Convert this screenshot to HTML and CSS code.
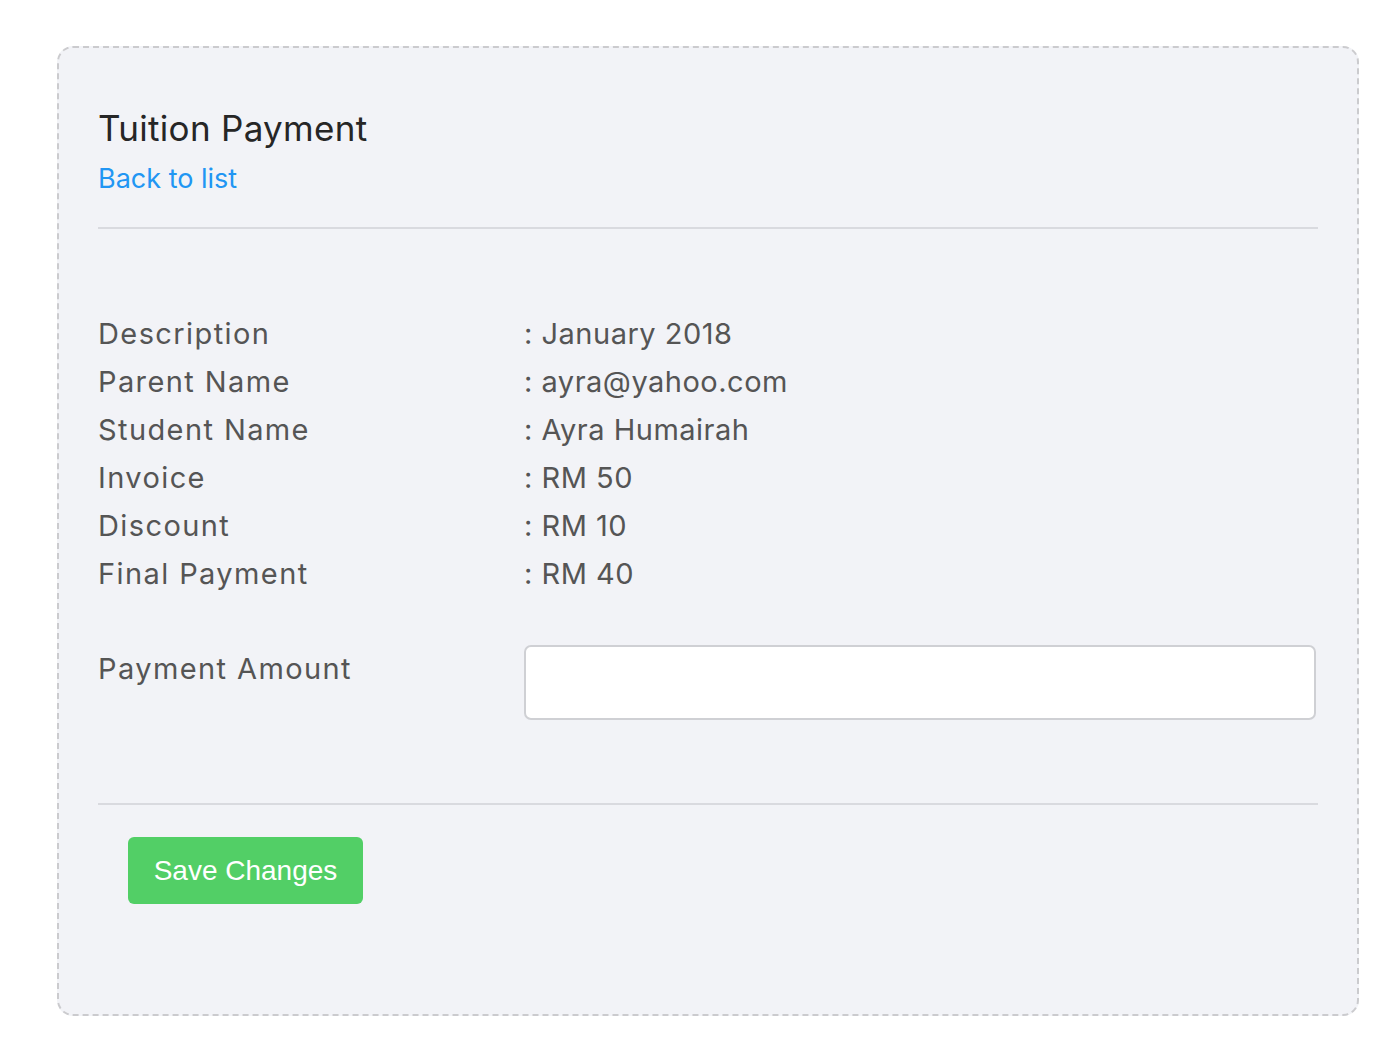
FILE: index.html
```html
<!DOCTYPE html>
<html>
<head>
<meta charset="utf-8">
<link rel="stylesheet" href="styles.css">
</head>
<body>
<div class="page">
  <div class="card">
    <div class="header">
      <h1 class="title">Tuition Payment</h1>
      <a class="back" href="#">Back to list</a>
    </div>
    <hr class="rule">
    <div class="details">
      <div class="label">Description</div><div class="value">: January 2018</div>
      <div class="label">Parent Name</div><div class="value">: ayra@yahoo.com</div>
      <div class="label">Student Name</div><div class="value">: Ayra Humairah</div>
      <div class="label">Invoice</div><div class="value">: RM 50</div>
      <div class="label">Discount</div><div class="value">: RM 10</div>
      <div class="label">Final Payment</div><div class="value">: RM 40</div>
    </div>
    <div class="form-row">
      <label class="label" for="amt">Payment Amount</label>
      <input class="input" id="amt" type="text">
    </div>
    <hr class="rule rule2">
    <div class="actions">
      <button class="btn">Save Changes</button>
    </div>
  </div>
</div>
</body>
</html>
```
FILE: styles.css
```css
html, body { margin: 0; padding: 0; background: #ffffff; }
body { font-family: Inter, "Noto Sans", sans-serif; }
.page { padding: 46px 37px 36px 57px; }
.card {
  box-sizing: border-box;
  width: 1302px;
  height: 970px;
  background: #f2f3f7;
  border: 2px dashed #cbcbce;
  border-radius: 16px;
  padding: 58px 39px 0 39px;
}
.header { display: flex; flex-direction: column; align-items: flex-start; }
.title {
  margin: 0;
  font-size: 35px;
  font-weight: 400;
  letter-spacing: 0.3px;
  color: #262626;
  line-height: 44px;
}
.back {
  margin-top: 9px;
  font-size: 27px;
  color: #2196f3;
  text-decoration: none;
  line-height: 40px;
}
.rule {
  border: none;
  height: 2px;
  background: #d9dadf;
  margin: 28px 0 0 0;
}
.details {
  display: grid;
  grid-template-columns: 426px 1fr;
  grid-auto-rows: 48px;
  margin-top: 80px;
  align-items: center;
}
.label, .value { font-size: 29px; color: #555555; }
.label { letter-spacing: 1.4px; }
.value { letter-spacing: 0.5px; }
.form-row {
  display: grid;
  grid-template-columns: 426px 1fr;
  margin-top: 48px;
  align-items: start;
}
.form-row .label { line-height: 48px; margin-top: 0; }
.input {
  box-sizing: border-box;
  height: 75px;
  width: 792px;
  background: #ffffff;
  border: 2px solid #cfd0d4;
  border-radius: 7px;
  font-size: 24px;
}
.rule2 { margin-top: 83px; }
.actions { padding: 32px 0 0 30px; }
.btn {
  font-family: "Liberation Sans", Arial, sans-serif;
  font-size: 28px;
  color: #ffffff;
  background: #52cf66;
  border: none;
  border-radius: 6px;
  width: 235px;
  height: 67px;
  padding: 0;
}
```
